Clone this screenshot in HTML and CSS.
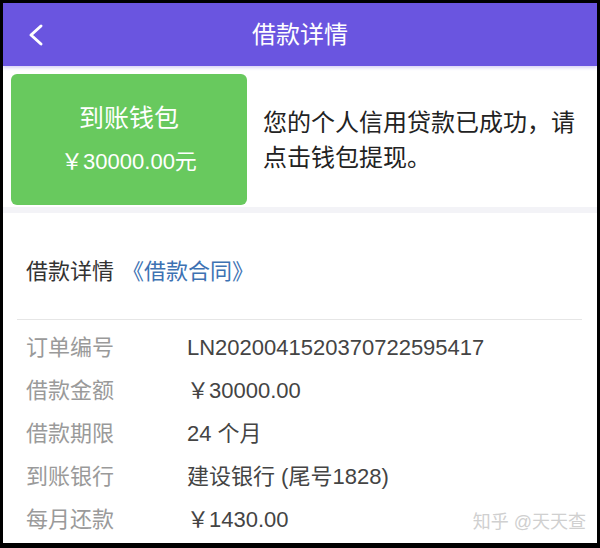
FILE: index.html
```html
<!DOCTYPE html>
<html lang="zh-CN">
<head>
  <meta charset="UTF-8" />
  <meta name="viewport" content="width=device-width, initial-scale=1.0"/>
  <title>借款详情</title>
  <link rel="stylesheet" href="styles.css">
</head>
<body>
  <div class="screen">

    <header class="topbar">
      <a class="back" href="#">
        <svg width="16" height="24" viewBox="0 0 16 24">
          <path d="M13 3 L3 12 L13 21" fill="none" stroke="#fff" stroke-width="3" stroke-linecap="round" stroke-linejoin="round"/>
        </svg>
      </a>
      <h1>借款详情</h1>
      <span></span>
    </header>

    <section class="wallet">
      <div class="wallet-box">
        <div class="wallet-title">到账钱包</div>
        <div class="wallet-amount">￥30000.00元</div>
      </div>
      <p class="wallet-tip">您的个人信用贷款已成功，请点击钱包提现。</p>
    </section>

    <section class="detail">
      <div class="detail-head">
        借款详情<a class="contract" href="#">《借款合同》</a>
      </div>
      <div class="divider"></div>

      <div class="rows">
        <div class="row">
          <span class="label">订单编号</span>
          <span class="value">LN2020041520370722595417</span>
        </div>
        <div class="row">
          <span class="label">借款金额</span>
          <span class="value">￥30000.00</span>
        </div>
        <div class="row">
          <span class="label">借款期限</span>
          <span class="value">24 个月</span>
        </div>
        <div class="row">
          <span class="label">到账银行</span>
          <span class="value">建设银行 (尾号1828)</span>
        </div>
        <div class="row">
          <span class="label">每月还款</span>
          <span class="value">￥1430.00</span>
        </div>
      </div>
    </section>

    <div class="watermark">知乎 @天天查</div>
  </div>
</body>
</html>
```

FILE: styles.css
```css
body {
  margin: 0;
  padding: 0;
  background: #000;
  font-family: "Liberation Sans", "Noto Sans CJK SC", sans-serif;
}

.screen {
  position: relative;
  margin: 3px 3px 0;
  height: 540px;
  overflow: hidden;
  background: #f3f3f7;
}

/* Top bar */
.topbar {
  display: grid;
  grid-template-columns: 1fr auto 1fr;
  align-items: center;
  height: 63px;
  background: #6a55e0;
  box-shadow: 0 2px 3px rgba(106, 85, 224, 0.25);
  position: relative;
  z-index: 1;
}

.back {
  display: flex;
  align-items: center;
  padding-left: 25px;
}

.topbar h1 {
  margin: 0;
  color: #fff;
  font-size: 24px;
  font-weight: normal;
  line-height: 30px;
}

/* Wallet card */
.wallet {
  display: flex;
  align-items: center;
  gap: 16px;
  padding: 8px 8px 2px;
  background: #fff;
}

.wallet-box {
  flex: none;
  width: 236px;
  height: 131px;
  border-radius: 6px;
  background: #68c95e;
  color: #fff;
  display: flex;
  flex-direction: column;
  justify-content: center;
  align-items: center;
}

.wallet-title {
  font-size: 25px;
  line-height: 43px;
}

.wallet-amount {
  font-size: 22px;
  line-height: 43px;
}

.wallet-tip {
  margin: 0;
  font-size: 24px;
  line-height: 35px;
  color: #222;
}

/* Detail section */
.detail {
  margin-top: 6px;
  background: #fff;
  height: 340px;
}

.detail-head {
  padding: 44px 23px 32px;
  font-size: 22px;
  line-height: 30px;
  color: #333;
}

.contract {
  margin-left: 8px;
  color: #3d72b3;
  text-decoration: none;
}

.divider {
  height: 1px;
  margin: 0 15px 0 14px;
  background: #e6e6e6;
}

.rows {
  padding: 6px 23px 0;
}

.row {
  display: flex;
  font-size: 22px;
  line-height: 43px;
}

.label {
  width: 161px;
  flex: none;
  color: #9a9a9a;
}

.value {
  color: #444;
}

.watermark {
  position: absolute;
  right: 11px;
  bottom: 11px;
  font-size: 18px;
  line-height: 20px;
  color: #d0d0d0;
  text-shadow: 0 0 1px #fff;
}
```
